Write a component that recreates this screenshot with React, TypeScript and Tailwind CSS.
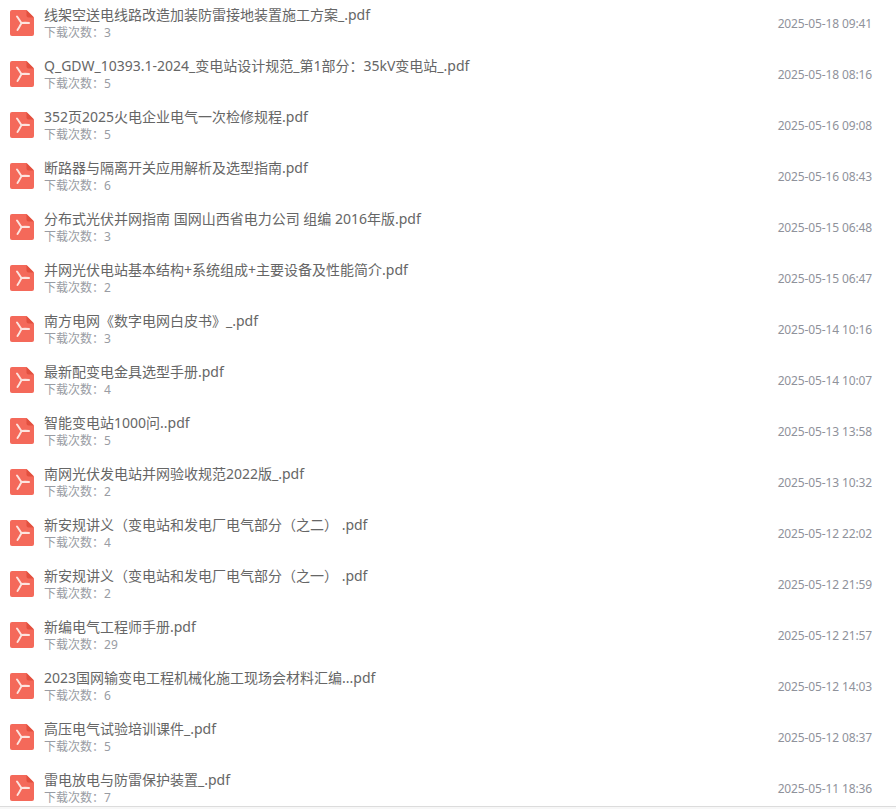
import React from 'react';

const files = [
  { name: '线架空送电线路改造加装防雷接地装置施工方案_.pdf', count: 3, date: '2025-05-18 09:41' },
  { name: 'Q_GDW_10393.1-2024_变电站设计规范_第1部分：35kV变电站_.pdf', count: 5, date: '2025-05-18 08:16' },
  { name: '352页2025火电企业电气一次检修规程.pdf', count: 5, date: '2025-05-16 09:08' },
  { name: '断路器与隔离开关应用解析及选型指南.pdf', count: 6, date: '2025-05-16 08:43' },
  { name: '分布式光伏并网指南 国网山西省电力公司 组编 2016年版.pdf', count: 3, date: '2025-05-15 06:48' },
  { name: '并网光伏电站基本结构+系统组成+主要设备及性能简介.pdf', count: 2, date: '2025-05-15 06:47' },
  { name: '南方电网《数字电网白皮书》_.pdf', count: 3, date: '2025-05-14 10:16' },
  { name: '最新配变电金具选型手册.pdf', count: 4, date: '2025-05-14 10:07' },
  { name: '智能变电站1000问..pdf', count: 5, date: '2025-05-13 13:58' },
  { name: '南网光伏发电站并网验收规范2022版_.pdf', count: 2, date: '2025-05-13 10:32' },
  { name: '新安规讲义（变电站和发电厂电气部分（之二） .pdf', count: 4, date: '2025-05-12 22:02' },
  { name: '新安规讲义（变电站和发电厂电气部分（之一） .pdf', count: 2, date: '2025-05-12 21:59' },
  { name: '新编电气工程师手册.pdf', count: 29, date: '2025-05-12 21:57' },
  { name: '2023国网输变电工程机械化施工现场会材料汇编...pdf', count: 6, date: '2025-05-12 14:03' },
  { name: '高压电气试验培训课件_.pdf', count: 5, date: '2025-05-12 08:37' },
  { name: '雷电放电与防雷保护装置_.pdf', count: 7, date: '2025-05-11 18:36' },
];

const PdfIcon = () => (
  <svg width="24" height="26" viewBox="0 0 24 26" className="shrink-0">
    <path d="M2 0H16.5L24 7.5V24a2 2 0 0 1-2 2H2a2 2 0 0 1-2-2V2a2 2 0 0 1 2-2Z" fill="#f4695a" />
    <path d="M16.5 0L24 7.5H18.5a2 2 0 0 1-2-2Z" fill="#e2503f" />
    <path
      d="M7 6.5C8.5 8.5 10 11 11.5 13M7.5 20C9 18 10.2 15.5 11.5 13C13.5 13 16 13.2 19 13C16.5 12.6 13.5 12.6 11.5 13"
      fill="none"
      stroke="#fde4df"
      strokeWidth="2"
      strokeLinecap="round"
      strokeLinejoin="round"
    />
  </svg>
);

export default function App() {
  return (
    <div className="h-[809px] overflow-hidden bg-white font-['Noto_Sans','Noto_Sans_CJK_SC',sans-serif]">
      <div className="h-[806px] overflow-hidden">
        {files.map((f) => (
          <div key={f.date} className="flex h-[51px] items-start pl-[10px] pr-[24px]">
            <div className="mt-[10px]">
              <PdfIcon />
            </div>
            <div className="ml-[10px] min-w-0 flex-1 pt-[5px]">
              <div className="h-[20px] text-[14px] leading-[20px] text-[#666666]">{f.name}</div>
              <div className="h-[15px] text-[12px] leading-[15px] text-[#999ca3]">下载次数：{f.count}</div>
            </div>
            <div className="mt-[16px] text-[12px] leading-[16px] tracking-[-0.13px] text-[#8f929b]">{f.date}</div>
          </div>
        ))}
      </div>
      <div className="h-[3px] border-t border-[#dcdcdc] bg-[#f7f7f7]" />
    </div>
  );
}
